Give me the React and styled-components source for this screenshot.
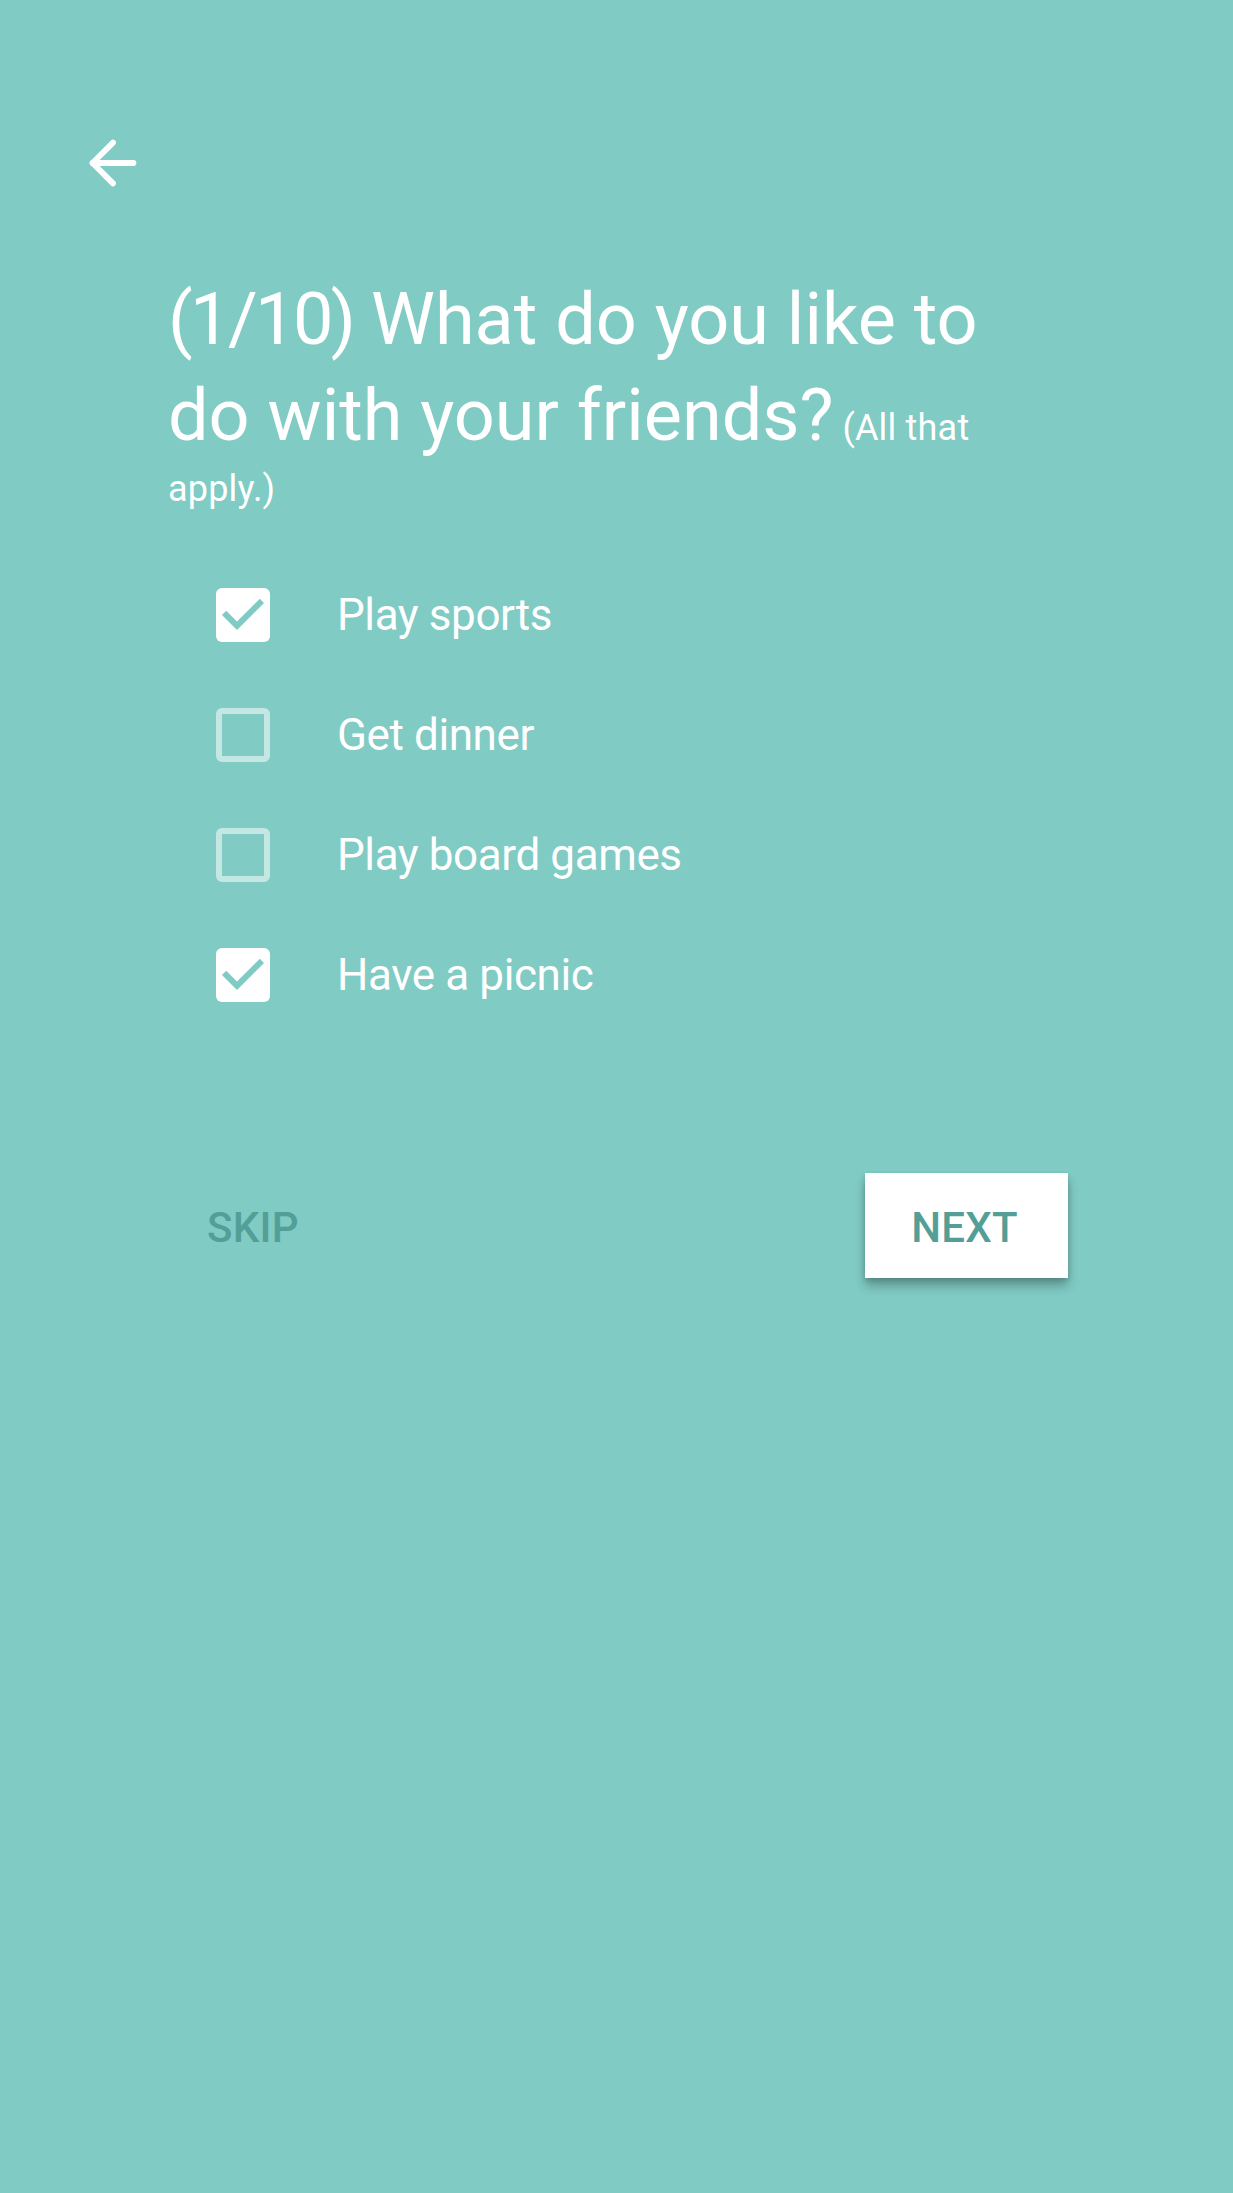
import React, { useState } from "react";
import styled, { createGlobalStyle } from "styled-components";

const Global = createGlobalStyle`
  html, body { margin: 0; padding: 0; }
  body {
    background: #80cbc4;
    font-family: Roboto, "Noto Sans", "Liberation Sans", sans-serif;
    -webkit-font-smoothing: antialiased;
  }
`;

const Page = styled.div`
  min-height: 100vh;
  background: #80cbc4;
  color: #ffffff;
  display: flex;
  flex-direction: column;
`;

const Header = styled.header`
  padding: 128px 0 0 78px;
  display: flex;
`;

const BackButton = styled.button`
  width: 70px;
  height: 70px;
  padding: 0;
  border: none;
  background: transparent;
  color: #ffffff;
  display: flex;
  align-items: center;
  justify-content: center;
  cursor: pointer;
`;

const Content = styled.main`
  padding: 0 150px 0 168px;
  display: flex;
  flex-direction: column;
`;

const Title = styled.h1`
  margin: 74px 0 0;
  font-weight: 400;
  font-size: 36px;
  line-height: 50px;
  max-width: 880px;
`;

const Big = styled.span`
  font-size: 72px;
  line-height: 96px;
  letter-spacing: ${(p) => (p.$tight ? "-2.6px" : "normal")};
`;

const Small = styled.span`
  font-size: 36px;
  letter-spacing: 0.2px;
`;

const Options = styled.ul`
  list-style: none;
  margin: 41px 0 0;
  padding: 0 0 0 48px;
  display: flex;
  flex-direction: column;
`;

const Option = styled.li`
  height: 120px;
  display: flex;
  align-items: center;
  gap: 67px;
  cursor: pointer;
`;

const Box = styled.span`
  box-sizing: border-box;
  width: 54px;
  height: 54px;
  flex: none;
  border-radius: 6px;
  display: flex;
  align-items: center;
  justify-content: center;
  background: ${(p) => (p.$checked ? "#ffffff" : "transparent")};
  border: ${(p) => (p.$checked ? "none" : "6px solid #c5e7e4")};
`;

const Label = styled.span`
  font-size: 44px;
  letter-spacing: -0.4px;
  color: #ffffff;
`;

const Actions = styled.div`
  margin-top: 138px;
  padding-left: 161px;
  width: 907px;
  display: flex;
  justify-content: space-between;
  align-items: center;
`;

const ActionButton = styled.button`
  height: 105px;
  padding: 3px 50px 0 46px;
  border: none;
  border-radius: 0;
  font-family: Roboto, "Noto Sans", "Liberation Sans", sans-serif;
  font-weight: 500;
  font-size: 42px;
  letter-spacing: 0.3px;
  color: #539f97;
  background: ${(p) => (p.$raised ? "#ffffff" : "transparent")};
  box-shadow: ${(p) =>
    p.$raised ? "0 8px 10px rgba(0,0,0,0.26), 0 2px 5px rgba(0,0,0,0.14)" : "none"};
  cursor: pointer;
`;

const CheckMark = () => (
  <svg width="54" height="54" viewBox="3 3 18 18" aria-hidden="true">
    <path d="M10 17l-5-5 1.41-1.41L10 14.17l7.59-7.59L19 8l-9 9z" fill="#80cbc4" />
  </svg>
);

const ArrowBack = () => (
  <svg
    width="70"
    height="70"
    viewBox="0 0 24 24"
    fill="none"
    stroke="currentColor"
    strokeWidth="2"
    strokeLinecap="round"
    strokeLinejoin="round"
  >
    <path d="M12 19l-7-7 7-7" />
    <path d="M19 12H5" />
  </svg>
);

const initial = [
  { label: "Play sports", checked: true },
  { label: "Get dinner", checked: false },
  { label: "Play board games", checked: false },
  { label: "Have a picnic", checked: true },
];

export default function App() {
  const [items, setItems] = useState(initial);
  const toggle = (i) =>
    setItems((prev) => prev.map((it, j) => (j === i ? { ...it, checked: !it.checked } : it)));

  return (
    <Page>
      <Global />
      <Header>
        <BackButton aria-label="Back">
          <ArrowBack />
        </BackButton>
      </Header>
      <Content>
        <Title>
          <Big $tight>(1/10)</Big>
          <Big> What do you like to do with your friends?</Big>{" "}
          <Small>(All that apply.)</Small>
        </Title>
        <Options>
          {items.map((it, i) => (
            <Option key={it.label} onClick={() => toggle(i)}>
              <Box $checked={it.checked}>{it.checked && <CheckMark />}</Box>
              <Label>{it.label}</Label>
            </Option>
          ))}
        </Options>
      </Content>
      <Actions>
        <ActionButton>SKIP</ActionButton>
        <ActionButton $raised>NEXT</ActionButton>
      </Actions>
    </Page>
  );
}
